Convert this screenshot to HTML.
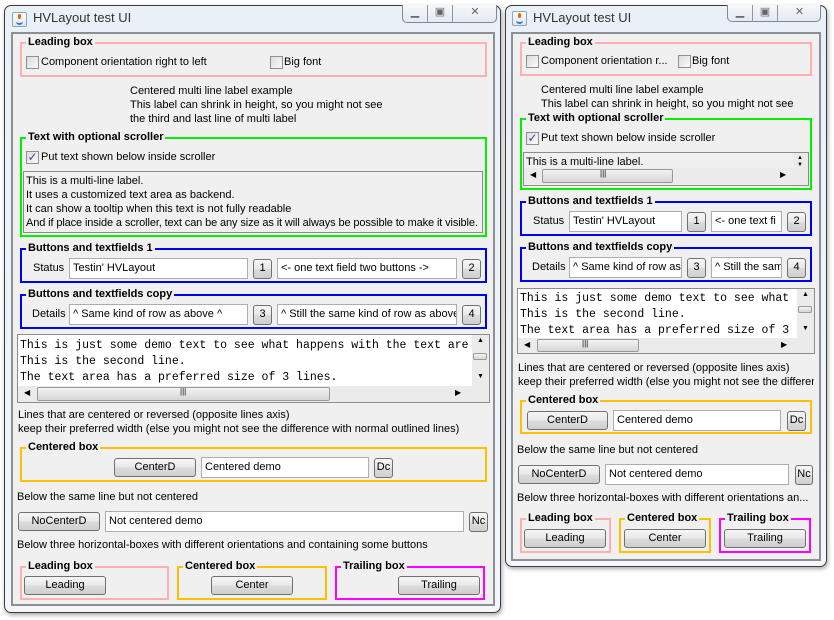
<!DOCTYPE html>
<html><head><meta charset="utf-8"><style>
*{margin:0;padding:0;box-sizing:border-box}
body{width:834px;height:620px;background:#fff;position:relative;overflow:hidden;font-family:"Liberation Sans",Arial,sans-serif;font-size:11px;color:#000}
div,span{position:absolute}
.win{border:1px solid #3c3c3c;border-radius:7px;background:linear-gradient(#e9f0f8,#f3f6fa);box-shadow:1px 2px 4px rgba(0,0,0,.35)}
.ttl{font-size:13px;color:#333;line-height:16px;white-space:nowrap}
.ico{width:15px;height:15px;border:1px solid #8aa;border-radius:2px;background:linear-gradient(#fff,#dde6ee)}
.ico:after{content:"";position:absolute;left:3px;top:2px;width:7px;height:8px;border-bottom:2px solid #37c;border-radius:0 0 4px 4px}
.ico:before{content:"";position:absolute;left:5px;top:1px;width:3px;height:5px;background:#e60;border-radius:2px}
.wb{border:1px solid #7d8795;border-top:none;border-radius:0 0 5px 5px;background:linear-gradient(#f5f8fb,#e4eaf1)}
.wb span{top:0;height:17px;border-right:1px solid #8d97a5;text-align:center;color:#666;line-height:15px}
.cont{background:#f0f0f0;border:2px solid #8c8f94}
.t{white-space:nowrap;line-height:14px;height:14px}
.bx{border:2px solid}
.bt{font-weight:bold;background:#f0f0f0;padding:0 2px;line-height:12px;top:-8px;left:4px;white-space:nowrap}
.cb{width:13px;height:13px;border:1px solid #8f8f8f;background:linear-gradient(135deg,#dcdcdc,#fafafa)}
.tf{background:#fff;border:1px solid #abadb3;white-space:nowrap;overflow:hidden;padding-left:3px;line-height:18px}
.bn{border:1px solid #707070;border-radius:3px;background:linear-gradient(#f6f6f6 0,#e8e8e8 50%,#dcdcdc 51%,#cfcfcf);text-align:center;line-height:17px;white-space:nowrap;overflow:hidden}
.mono{font-family:"Liberation Mono",monospace;font-size:11.5px;white-space:nowrap;line-height:16px}
.sb{background:#ebebeb}
.th{border:1px solid #999;border-radius:2px;background:linear-gradient(#f3f3f3,#d6d6d6)}
</style></head><body>

<!-- LEFT WINDOW -->
<div class="win" style="left:4px;top:5px;width:497px;height:608px"></div>
<div class="ico" style="left:12px;top:12px"></div>
<div class="ttl" style="left:33px;top:10px">HVLayout test UI</div>
<div class="wb" style="left:402px;top:5px;width:95px;height:18px">
<span style="left:0;width:25px">▁</span><span style="left:25px;width:25px">▣</span><span style="left:50px;width:44px;border:none">✕</span></div>
<div class="cont" style="left:11px;top:32px;width:484px;height:574px"></div>

<div class="bx" style="left:20px;top:42px;width:467px;height:35px;border-color:#ffafaf"><span class="bt">Leading box</span></div>
<div class="cb" style="left:26px;top:56px"></div><div class="t" style="left:41px;top:55px">Component orientation right to left</div>
<div class="cb" style="left:270px;top:56px"></div><div class="t" style="left:284px;top:55px">Big font</div>

<div class="t" style="left:130px;top:84px">Centered multi line label example</div>
<div class="t" style="left:130px;top:98px">This label can shrink in height, so you might not see</div>
<div class="t" style="left:130px;top:112px">the third and last line of multi label</div>

<div class="bx" style="left:20px;top:137px;width:467px;height:100px;border-color:#00f000"><span class="bt">Text with optional scroller</span></div>
<div class="cb" style="left:26px;top:151px;color:#449;font-size:12px;line-height:11px;text-align:center">✓</div><div class="t" style="left:41px;top:150px">Put text shown below inside scroller</div>
<div style="left:23px;top:171px;width:460px;height:62px;border:1px solid #8c8c8c"></div>
<div class="t" style="left:26px;top:174px">This is a multi-line label.</div>
<div class="t" style="left:26px;top:188px">It uses a customized text area as backend.</div>
<div class="t" style="left:26px;top:202px">It can show a tooltip when this text is not fully readable</div>
<div class="t" style="left:26px;top:216px;letter-spacing:-0.12px">And if place inside a scroller, text can be any size as it will always be possible to make it visible.</div>

<div class="bx" style="left:20px;top:248px;width:467px;height:35px;border-color:#0000f0"><span class="bt">Buttons and textfields 1</span></div>
<div class="t" style="left:33px;top:261px">Status</div>
<div class="tf" style="left:69px;top:258px;width:179px;height:21px">Testin' HVLayout</div>
<div class="bn" style="left:253px;top:259px;width:19px;height:20px">1</div>
<div class="tf" style="left:277px;top:258px;width:180px;height:21px">&lt;- one text field two buttons -&gt;</div>
<div class="bn" style="left:462px;top:259px;width:19px;height:20px">2</div>

<div class="bx" style="left:20px;top:294px;width:467px;height:35px;border-color:#0000f0"><span class="bt">Buttons and textfields copy</span></div>
<div class="t" style="left:32px;top:307px">Details</div>
<div class="tf" style="left:69px;top:304px;width:179px;height:21px">^ Same kind of row as above ^</div>
<div class="bn" style="left:253px;top:305px;width:19px;height:20px">3</div>
<div class="tf" style="left:277px;top:304px;width:180px;height:21px">^ Still the same kind of row as above</div>
<div class="bn" style="left:462px;top:305px;width:19px;height:20px">4</div>

<div style="left:17px;top:334px;width:473px;height:69px;border:1px solid #8c8c8c;background:#fff;overflow:hidden">
<div class="mono" style="left:2px;top:3px">This is just some demo text to see what happens with the text are</div>
<div class="mono" style="left:2px;top:19px">This is the second line.</div>
<div class="mono" style="left:2px;top:35px">The text area has a preferred size of 3 lines.</div>
<div class="sb" style="left:454px;top:0;width:17px;height:51px"><span style="left:5px;top:2px;font-size:7px">▲</span><div class="th" style="left:1px;top:18px;width:14px;height:7px"></div><span style="left:5px;top:38px;font-size:7px">▼</span></div>
<div class="sb" style="left:0;top:51px;width:454px;height:16px"><span style="left:6px;top:2px;font-size:8px">◀</span><div class="th" style="left:19px;top:1px;width:293px;height:14px"></div><span style="left:162px;top:1px;font-size:8px">|||</span><span style="left:437px;top:2px;font-size:8px">▶</span></div>
<div class="sb" style="left:454px;top:51px;width:17px;height:16px"></div>
</div>

<div class="t" style="left:18px;top:408px">Lines that are centered or reversed (opposite lines axis)</div>
<div class="t" style="left:18px;top:422px">keep their preferred width (else you might not see the difference with normal outlined lines)</div>

<div class="bx" style="left:20px;top:447px;width:467px;height:35px;border-color:#ffc000"><span class="bt">Centered box</span></div>
<div class="bn" style="left:114px;top:458px;width:82px;height:19px">CenterD</div>
<div class="tf" style="left:201px;top:457px;width:168px;height:21px">Centered demo</div>
<div class="bn" style="left:374px;top:458px;width:19px;height:20px">Dc</div>

<div class="t" style="left:17px;top:490px">Below the same line but not centered</div>
<div class="bn" style="left:18px;top:512px;width:82px;height:19px">NoCenterD</div>
<div class="tf" style="left:105px;top:511px;width:359px;height:21px">Not centered demo</div>
<div class="bn" style="left:469px;top:512px;width:19px;height:20px">Nc</div>
<div class="t" style="left:17px;top:538px">Below three horizontal-boxes with different orientations and containing some buttons</div>

<div class="bx" style="left:20px;top:566px;width:149px;height:34px;border-color:#ffafaf"><span class="bt">Leading box</span></div>
<div class="bn" style="left:24px;top:576px;width:82px;height:19px">Leading</div>
<div class="bx" style="left:177px;top:566px;width:150px;height:34px;border-color:#ffc000"><span class="bt">Centered box</span></div>
<div class="bn" style="left:211px;top:576px;width:82px;height:19px">Center</div>
<div class="bx" style="left:335px;top:566px;width:150px;height:34px;border-color:#ff00ff"><span class="bt">Trailing box</span></div>
<div class="bn" style="left:398px;top:576px;width:82px;height:19px">Trailing</div>

<!-- RIGHT WINDOW -->
<div class="win" style="left:505px;top:5px;width:322px;height:562px"></div>
<div class="ico" style="left:512px;top:11px"></div>
<div class="ttl" style="left:533px;top:10px">HVLayout test UI</div>
<div class="wb" style="left:727px;top:5px;width:94px;height:17px">
<span style="left:0;width:25px">▁</span><span style="left:25px;width:25px">▣</span><span style="left:50px;width:43px;border:none">✕</span></div>
<div class="cont" style="left:511px;top:32px;width:310px;height:529px"></div>

<div class="bx" style="left:520px;top:42px;width:292px;height:34px;border-color:#ffafaf"><span class="bt">Leading box</span></div>
<div class="cb" style="left:526px;top:55px"></div><div class="t" style="left:541px;top:54px">Component orientation r...</div>
<div class="cb" style="left:678px;top:55px"></div><div class="t" style="left:692px;top:54px">Big font</div>
<div style="left:520px;top:80px;width:292px;height:37px;overflow:hidden">
<div class="t" style="left:21px;top:3px">Centered multi line label example</div>
<div class="t" style="left:21px;top:17px">This label can shrink in height, so you might not see</div>
</div>

<div class="bx" style="left:520px;top:118px;width:292px;height:72px;border-color:#00f000"><span class="bt">Text with optional scroller</span></div>
<div class="cb" style="left:526px;top:132px;color:#449;font-size:12px;line-height:11px;text-align:center">✓</div><div class="t" style="left:541px;top:131px">Put text shown below inside scroller</div>
<div style="left:523px;top:152px;width:286px;height:34px;border:1px solid #8c8c8c;overflow:hidden">
<div class="t" style="left:2px;top:2px">This is a multi-line label.</div>
<div class="sb" style="left:0;top:15px;width:269px;height:16px"><span style="left:6px;top:2px;font-size:8px">◀</span><div class="th" style="left:18px;top:1px;width:131px;height:14px"></div><span style="left:76px;top:1px;font-size:8px">|||</span><span style="left:256px;top:2px;font-size:8px">▶</span></div>
<div class="sb" style="left:269px;top:0;width:16px;height:32px"><span style="left:4px;top:2px;font-size:6px">▲</span><span style="left:4px;top:9px;font-size:6px">▼</span></div>
</div>

<div class="bx" style="left:520px;top:201px;width:292px;height:35px;border-color:#0000f0"><span class="bt">Buttons and textfields 1</span></div>
<div class="t" style="left:533px;top:214px">Status</div>
<div class="tf" style="left:569px;top:211px;width:113px;height:21px">Testin' HVLayout</div>
<div class="bn" style="left:687px;top:212px;width:19px;height:20px">1</div>
<div class="tf" style="left:711px;top:211px;width:71px;height:21px">&lt;- one text fi</div>
<div class="bn" style="left:787px;top:212px;width:19px;height:20px">2</div>

<div class="bx" style="left:520px;top:247px;width:292px;height:35px;border-color:#0000f0"><span class="bt">Buttons and textfields copy</span></div>
<div class="t" style="left:532px;top:260px">Details</div>
<div class="tf" style="left:569px;top:257px;width:113px;height:21px">^ Same kind of row as</div>
<div class="bn" style="left:687px;top:258px;width:19px;height:20px">3</div>
<div class="tf" style="left:711px;top:257px;width:71px;height:21px">^ Still the sam</div>
<div class="bn" style="left:787px;top:258px;width:19px;height:20px">4</div>

<div style="left:517px;top:288px;width:298px;height:66px;border:1px solid #8c8c8c;background:#fff;overflow:hidden">
<div class="mono" style="left:2px;top:2px">This is just some demo text to see what</div>
<div class="mono" style="left:2px;top:18px">This is the second line.</div>
<div class="mono" style="left:2px;top:34px">The text area has a preferred size of 3</div>
<div class="sb" style="left:279px;top:0;width:17px;height:49px"><span style="left:5px;top:2px;font-size:7px">▲</span><div class="th" style="left:1px;top:17px;width:14px;height:7px"></div><span style="left:5px;top:36px;font-size:7px">▼</span></div>
<div class="sb" style="left:0;top:49px;width:279px;height:15px"><span style="left:6px;top:2px;font-size:8px">◀</span><div class="th" style="left:19px;top:1px;width:102px;height:13px"></div><span style="left:64px;top:1px;font-size:8px">|||</span><span style="left:263px;top:2px;font-size:8px">▶</span></div>
<div class="sb" style="left:279px;top:49px;width:17px;height:15px"></div>
</div>

<div style="left:517px;top:360px;width:297px;height:30px;overflow:hidden">
<div class="t" style="left:1px;top:1px">Lines that are centered or reversed (opposite lines axis)</div>
<div class="t" style="left:1px;top:15px">keep their preferred width (else you might not see the difference with normal outlined lines)</div>
</div>

<div class="bx" style="left:520px;top:400px;width:292px;height:34px;border-color:#ffc000"><span class="bt">Centered box</span></div>
<div class="bn" style="left:527px;top:411px;width:81px;height:19px">CenterD</div>
<div class="tf" style="left:613px;top:410px;width:168px;height:21px">Centered demo</div>
<div class="bn" style="left:787px;top:411px;width:19px;height:20px">Dc</div>

<div class="t" style="left:517px;top:443px">Below the same line but not centered</div>
<div class="bn" style="left:518px;top:465px;width:82px;height:19px">NoCenterD</div>
<div class="tf" style="left:605px;top:464px;width:184px;height:21px">Not centered demo</div>
<div class="bn" style="left:795px;top:465px;width:18px;height:20px">Nc</div>
<div class="t" style="left:517px;top:491px">Below three horizontal-boxes with different orientations an...</div>

<div class="bx" style="left:520px;top:518px;width:91px;height:35px;border-color:#ffafaf"><span class="bt">Leading box</span></div>
<div class="bn" style="left:524px;top:529px;width:82px;height:19px">Leading</div>
<div class="bx" style="left:619px;top:518px;width:92px;height:35px;border-color:#ffc000"><span class="bt">Centered box</span></div>
<div class="bn" style="left:624px;top:529px;width:82px;height:19px">Center</div>
<div class="bx" style="left:719px;top:518px;width:92px;height:35px;border-color:#ff00ff"><span class="bt">Trailing box</span></div>
<div class="bn" style="left:724px;top:529px;width:82px;height:19px">Trailing</div>

</body></html>
